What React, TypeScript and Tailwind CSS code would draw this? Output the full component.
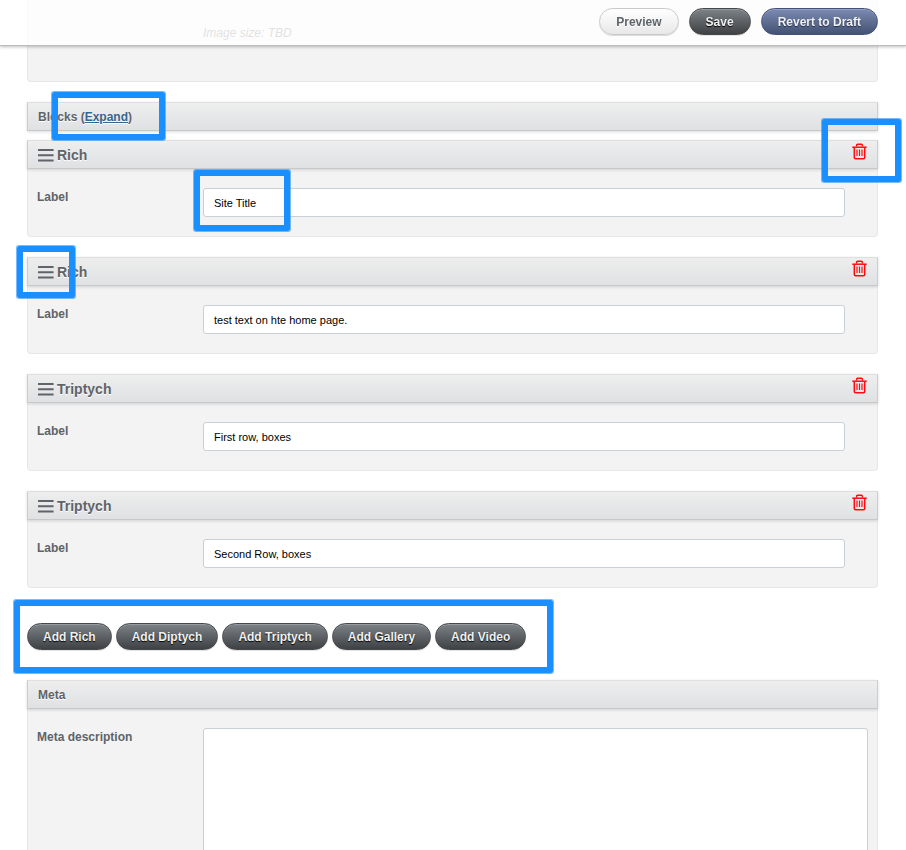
import { useState, type ReactNode } from "react"

type Block = { id: number; type: string; label: string }

const initialBlocks: Block[] = [
  { id: 1, type: "Rich", label: "Site Title" },
  { id: 2, type: "Rich", label: "test text on hte home page." },
  { id: 3, type: "Triptych", label: "First row, boxes" },
  { id: 4, type: "Triptych", label: "Second Row, boxes" },
]

const blockTypes = ["Rich", "Diptych", "Triptych", "Gallery", "Video"]

const buttonBase =
  "h-[27px] cursor-pointer rounded-full border text-xs font-bold whitespace-nowrap"
const darkButton =
  "border-[#45484b] bg-linear-to-b from-[#7d8388] to-[#3f4245] text-[#f0f1f1] [text-shadow:0_1px_1px_#000] shadow-[inset_0_1px_0_rgba(255,255,255,0.2),0_1px_0_#e4e4e4]"
const lightButton =
  "border-[#c7c9cb] bg-linear-to-b from-white to-[#e8e8e8] text-[#5e6469] [text-shadow:0_1px_0_#fff] shadow-[0_1px_0_#dcdcdc]"
const blueButton =
  "border-[#43507a] bg-linear-to-b from-[#7c8bb3] to-[#445273] text-[#f0f1f1] [text-shadow:0_1px_1px_#222c48] shadow-[inset_0_1px_0_rgba(255,255,255,0.2)]"

const inputStyle =
  "min-w-0 flex-1 rounded-[3px] border border-[#c9d0d6] bg-white px-2.5 text-[11px] text-black"

// Blue callout frame drawn over the form
function Callout({ className }: { className: string }) {
  return (
    <div
      aria-hidden="true"
      className={`pointer-events-none absolute z-10 m-px rounded-[2px] border-[6px] border-[#1a8fff] shadow-[0_0_0_1px_rgba(26,143,255,0.6)] ${className}`}
    />
  )
}

function SectionHeader({ children }: { children: ReactNode }) {
  return (
    <div className="relative flex h-[29px] items-center justify-between border border-t-[#dfdfdf] border-r-[#cccdce] border-b-[#c6c8ca] border-l-[#cccdce] bg-linear-to-b from-[#eeeeee] to-[#dfe1e3] px-2.5 text-[#5e6469] shadow-[0_1px_3px_rgba(0,0,0,0.14)] [text-shadow:0_1px_0_#fff]">
      {children}
    </div>
  )
}

function HandleIcon() {
  return (
    <svg width="16" height="15" viewBox="0 0 16 15" fill="#5e6469" aria-hidden="true">
      <rect y="2" width="15.6" height="2" rx="0.3" />
      <rect y="7.2" width="15.6" height="2" rx="0.3" />
      <rect y="12.5" width="15.6" height="2" rx="0.3" />
    </svg>
  )
}

function TrashIcon() {
  return (
    <svg width="15" height="17" viewBox="0 0 15 17" fill="none" stroke="#ff0a12" aria-hidden="true">
      <path d="M.3 4.2h14.4" strokeWidth="1.5" />
      <path d="M4.6 3.6V2.2Q4.6 1.2 5.6 1.2h3.8q1 0 1 1v1.4" strokeWidth="1.4" />
      <path d="M2.3 4.6v10q0 1.2 1.2 1.2h8q1.2 0 1.2-1.2v-10" strokeWidth="1.5" />
      <path d="M5 6.4v6.6M7.5 6.4v6.6M10 6.4v6.6" strokeWidth="1.2" />
    </svg>
  )
}

export default function App() {
  const [blocks, setBlocks] = useState(initialBlocks)
  const [description, setDescription] = useState("")

  const updateLabel = (id: number, label: string) => {
    setBlocks(blocks.map((b) => (b.id === id ? { ...b, label } : b)))
  }

  const addBlock = (type: string) => {
    setBlocks([...blocks, { id: Date.now(), type, label: "" }])
  }

  return (
    <div className="h-screen overflow-hidden bg-white font-['Liberation_Sans',Arial,sans-serif] text-xs text-[#5e6469]">
      <header className="fixed inset-x-0 top-0 z-20 flex h-[46px] justify-end gap-2.5 border-b border-[#bcbcbc] bg-white/80 pt-2 pr-7 shadow-[0_1px_3px_rgba(0,0,0,0.25)]">
        <button type="button" className={`px-4 ${buttonBase} ${lightButton}`}>Preview</button>
        <button type="button" className={`px-4 ${buttonBase} ${darkButton}`}>Save</button>
        <button type="button" className={`px-4 ${buttonBase} ${blueButton}`}>Revert to Draft</button>
      </header>

      <main className="mr-7 ml-[27px]">
        <div className="mb-5 rounded-b border border-t-0 border-[#e7e7e7] bg-[#f3f3f3] pt-[25px] pb-10 pl-[175px]">
          <p className="leading-4 text-[#6a6a6a] italic">Image size: TBD</p>
        </div>

        <div className="relative mb-[9px]">
          <SectionHeader>
            <h2 className="font-bold">
              Blocks (<a href="#blocks" className="text-[#35668f] underline">Expand</a>)
            </h2>
          </SectionHeader>
          <Callout className="-top-[11px] left-6 h-12 w-[113px]" />
        </div>

        <div id="blocks" className="flex flex-col gap-5">
          {blocks.map((block, i) => (
            <section key={block.id} className="relative">
              <SectionHeader>
                <h3 className="flex items-center gap-[3px] text-sm font-bold">
                  <HandleIcon />
                  {block.type}
                </h3>
                <button
                  type="button"
                  aria-label={`Delete ${block.type}`}
                  className="mb-1.5 cursor-pointer"
                  onClick={() => setBlocks(blocks.filter((b) => b.id !== block.id))}
                >
                  <TrashIcon />
                </button>
              </SectionHeader>
              <div className="flex rounded-b border border-t-0 border-[#e7e7e7] bg-[#f3f3f3] pt-[19px] pr-8 pb-[19px] pl-[9px]">
                <label htmlFor={`label-${block.id}`} className="w-[166px] leading-[18px] font-bold">
                  Label
                </label>
                <input
                  id={`label-${block.id}`}
                  type="text"
                  value={block.label}
                  onChange={(e) => updateLabel(block.id, e.target.value)}
                  className={`h-[29px] ${inputStyle}`}
                />
              </div>
              {i === 0 && (
                <>
                  <Callout className="-top-[22px] -right-6 h-[63px] w-[79px]" />
                  <Callout className="top-[29px] left-[166px] h-[61px] w-24" />
                </>
              )}
              {i === 1 && <Callout className="-top-3 -left-[11px] h-[52px] w-[58px]" />}
            </section>
          ))}
        </div>

        <div className="relative mt-[35px] mb-[30px] flex w-fit gap-1">
          {blockTypes.map((type) => (
            <button
              key={type}
              type="button"
              className={`px-[15px] ${buttonBase} ${darkButton}`}
              onClick={() => addBlock(type)}
            >
              Add {type}
            </button>
          ))}
          <Callout className="-top-6 -right-7 -bottom-6 -left-3.5" />
        </div>

        <section>
          <SectionHeader>
            <h2 className="font-bold">Meta</h2>
          </SectionHeader>
          <div className="flex border border-t-0 border-[#e7e7e7] bg-[#f3f3f3] pt-[19px] pr-[9px] pb-5 pl-[9px]">
            <label htmlFor="meta-description" className="w-[166px] leading-[18px] font-bold">
              Meta description
            </label>
            <textarea
              id="meta-description"
              rows={14}
              value={description}
              onChange={(e) => setDescription(e.target.value)}
              className={`resize-none py-2 ${inputStyle}`}
            />
          </div>
        </section>
      </main>
    </div>
  )
}
